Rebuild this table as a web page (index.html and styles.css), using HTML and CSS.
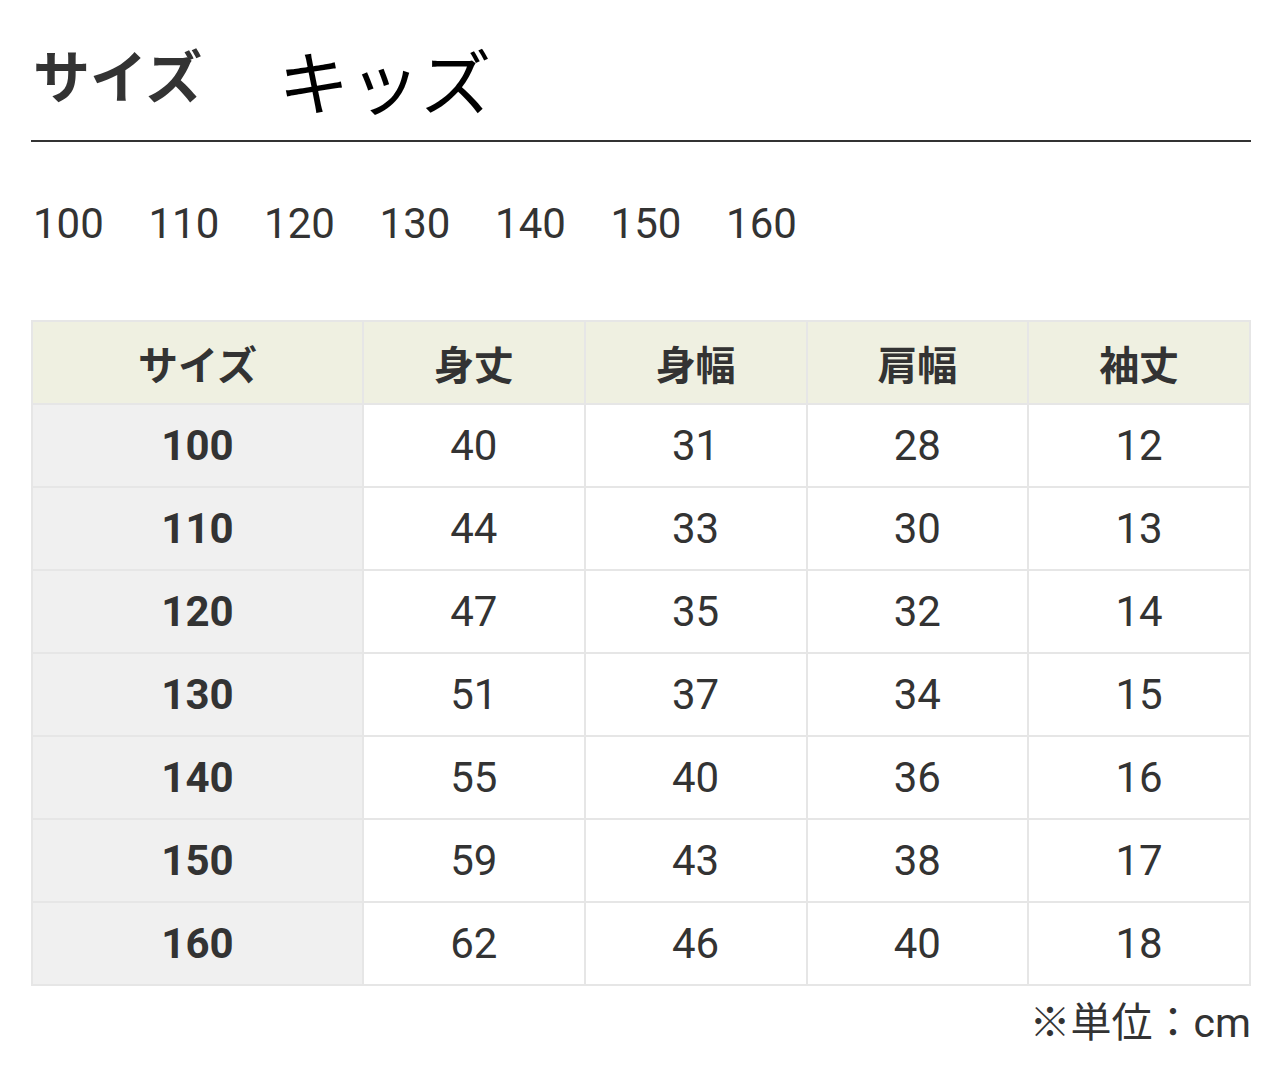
FILE: index.html
```html
<!DOCTYPE html>
<html lang="ja">
<head>
<meta charset="utf-8">
<link rel="stylesheet" href="styles.css">
</head>
<body>
<div class="page">
  <div class="title">
    <span class="title-label">サイズ</span>
    <span class="title-value">キッズ</span>
  </div>
  <div class="sizes">
    <span>100</span><span>110</span><span>120</span><span>130</span><span>140</span><span>150</span><span>160</span>
  </div>
  <table class="chart">
    <thead>
      <tr><th class="c1">サイズ</th><th>身丈</th><th>身幅</th><th>肩幅</th><th>袖丈</th></tr>
    </thead>
    <tbody>
      <tr><th class="c1">100</th><td>40</td><td>31</td><td>28</td><td>12</td></tr>
      <tr><th class="c1">110</th><td>44</td><td>33</td><td>30</td><td>13</td></tr>
      <tr><th class="c1">120</th><td>47</td><td>35</td><td>32</td><td>14</td></tr>
      <tr><th class="c1">130</th><td>51</td><td>37</td><td>34</td><td>15</td></tr>
      <tr><th class="c1">140</th><td>55</td><td>40</td><td>36</td><td>16</td></tr>
      <tr><th class="c1">150</th><td>59</td><td>43</td><td>38</td><td>17</td></tr>
      <tr><th class="c1">160</th><td>62</td><td>46</td><td>40</td><td>18</td></tr>
    </tbody>
  </table>
  <div class="unit">※単位：cm</div>
</div>
</body>
</html>
```

FILE: styles.css
```css
html, body {
  margin: 0;
  padding: 0;
  background: #fff;
}
body {
  font-family: Roboto, "Noto Sans CJK JP", sans-serif;
  color: #333;
}
.page {
  width: 1220px;
  margin-left: 31px;
}
.title {
  height: 142px;
  border-bottom: 2px solid #333;
  display: flex;
  align-items: center;
  gap: 76px;
  padding-left: 2px;
  box-sizing: border-box;
  padding-top: 6px;
}
.title-label {
  font-family: "Noto Sans CJK JP", sans-serif;
  font-weight: 700;
  font-size: 57px;
  color: #333;
  line-height: 1;
}
.title-value {
  font-family: "Noto Sans CJK JP", sans-serif;
  font-weight: 400;
  font-size: 71px;
  color: #000;
  line-height: 1;
  margin-top: 10px;
}
.sizes {
  display: flex;
  gap: 44.7px;
  padding-left: 2px;
  font-size: 42px;
  line-height: 1;
  margin-top: 61px;
  color: #333;
}
.chart {
  margin-top: 75px;
  width: 1220px;
  border-collapse: collapse;
  table-layout: fixed;
}
.chart th, .chart td {
  border: 2px solid #e6e6e6;
  height: 81px;
  padding: 0;
  text-align: center;
  vertical-align: middle;
  font-size: 42px;
  line-height: 1;
  color: #333;
}
.chart th.c1 { width: 329px; }
.chart thead th {
  background: #eff0e1;
  font-family: "Noto Sans CJK JP", sans-serif;
  font-weight: 700;
  font-size: 40px;
}
.chart tbody th {
  background: #f0f0f0;
  font-weight: 700;
}
.chart td {
  font-weight: 400;
}
.unit {
  text-align: right;
  font-size: 41px;
  line-height: 1;
  margin-top: 17px;
  color: #333;
}
```
